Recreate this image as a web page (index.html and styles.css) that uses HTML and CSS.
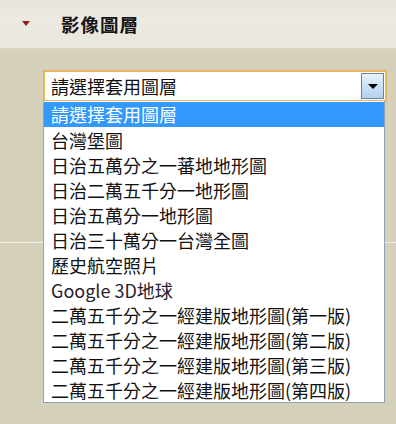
FILE: index.html
```html
<!DOCTYPE html>
<html lang="zh-Hant">
<head>
  <meta charset="UTF-8" />
  <meta name="viewport" content="width=device-width, initial-scale=1.0" />
  <title>影像圖層</title>
  <link rel="stylesheet" href="styles.css">
</head>
<body>
  <div class="layer-panel">
    <div class="panel-head">
      <span class="toggle"></span>
      <h2>影像圖層</h2>
    </div>

    <div class="panel-body">
      <div class="combo">
        <div class="combo-value">請選擇套用圖層</div>
        <span class="combo-btn"><span class="caret"></span></span>
      </div>

      <ul class="combo-list">
        <li class="selected">請選擇套用圖層</li>
        <li>台灣堡圖</li>
        <li>日治五萬分之一蕃地地形圖</li>
        <li>日治二萬五千分一地形圖</li>
        <li>日治五萬分一地形圖</li>
        <li>日治三十萬分一台灣全圖</li>
        <li>歷史航空照片</li>
        <li class="latin">Google 3D地球</li>
        <li>二萬五千分之一經建版地形圖(第一版)</li>
        <li>二萬五千分之一經建版地形圖(第二版)</li>
        <li>二萬五千分之一經建版地形圖(第三版)</li>
        <li>二萬五千分之一經建版地形圖(第四版)</li>
      </ul>
    </div>
  </div>
</body>
</html>
```

FILE: styles.css
```css
* {
  box-sizing: border-box;
}

body {
  margin: 0;
  background-color: #d5d0ba;
  font-family: "Noto Sans CJK TC", "Noto Sans", sans-serif;
  color: #111;
  height: 424px;
  overflow: hidden;
}

.panel-head {
  height: 50px;
  display: flex;
  align-items: center;
  background: linear-gradient(#e6e3da, #ece9e2 40%, #e9e6de);
  border-bottom: 2px solid #d9d4c1;
}

.toggle {
  width: 0;
  height: 0;
  margin-left: 22px;
  margin-top: -2px;
  border-left: 4.5px solid transparent;
  border-right: 4.5px solid transparent;
  border-top: 5px solid #9a1d1d;
}

.panel-head h2 {
  margin: 0 0 0 31px;
  font-size: 18.5px;
  font-weight: 700;
  letter-spacing: 1px;
  color: #151515;
}

.panel-body {
  position: relative;
  height: 193px;
  padding: 20px 0 0 43px;
  border-bottom: 1px solid #f1efe7;
}

.combo {
  width: 344px;
  height: 32px;
  display: flex;
  align-items: center;
  justify-content: space-between;
  background: #fff;
  border: 2px solid #e6b55e;
  padding: 0 1px 0 6px;
}

.combo-value {
  font-size: 18px;
  line-height: 1;
}

.combo-btn {
  width: 23px;
  height: 26px;
  display: flex;
  align-items: center;
  justify-content: center;
  border: 1px solid #6f8290;
  background: linear-gradient(#e8f2fb, #c6def3 60%, #b3d2ee);
}

.caret {
  width: 0;
  height: 0;
  border-left: 5px solid transparent;
  border-right: 5px solid transparent;
  border-top: 5px solid #000;
}

.combo-list {
  position: absolute;
  top: 51px;
  left: 43px;
  width: 342px;
  margin: 0;
  padding: 1px 0 0;
  list-style: none;
  background: #fff;
  border: 1px solid #8fa3b3;
  border-top: none;
  z-index: 2;
}

.combo-list li {
  height: 25px;
  line-height: 26px;
  padding-left: 7px;
  font-size: 18px;
  white-space: nowrap;
}

.combo-list li.selected {
  background: #3399ff;
  color: #fff;
  line-height: 25px;
}

.combo-list li.latin {
  color: #2a2030;
}
```
